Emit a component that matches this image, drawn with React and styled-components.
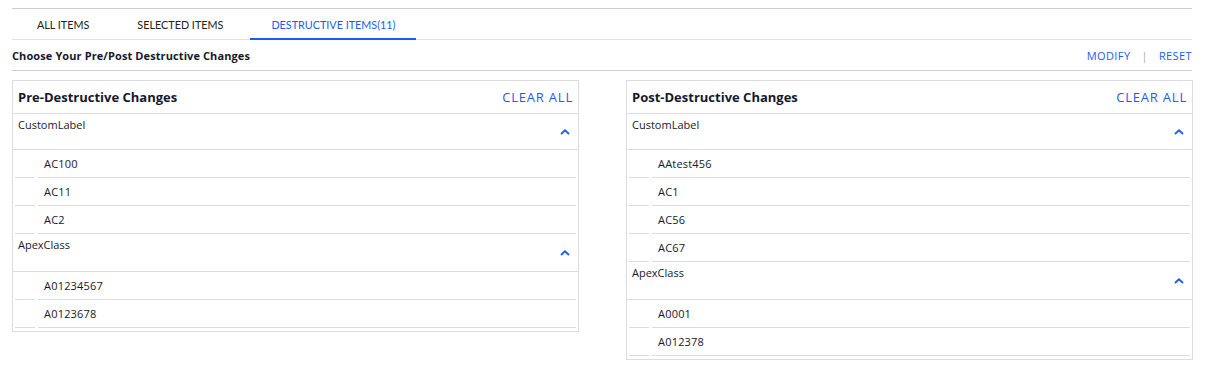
import React from 'react';
import styled, { createGlobalStyle } from 'styled-components';

const GlobalStyle = createGlobalStyle`
  body {
    margin: 0;
    background: #ffffff;
    font-family: 'Open Sans', 'Noto Sans', sans-serif;
    color: #16192c;
  }
`;

const BLUE = '#1b5cf5';
const LINE = '#dcdcdc';

const Page = styled.div`
  padding: 8px 16px 0 12px;
`;

const TabBar = styled.div`
  display: flex;
  gap: 6px;
  height: 30px;
  border-top: 1px solid #cdcdcd;
  border-bottom: 1px solid #e2e2e2;
  padding-left: 4px;
`;

const Tab = styled.div`
  display: flex;
  align-items: center;
  padding: 2px 21px 0;
  font-family: 'Lato', sans-serif;
  font-size: 10.8px;
  text-transform: uppercase;
  color: ${p => (p.active ? BLUE : '#222')};
  border-bottom: 2px solid ${p => (p.active ? BLUE : 'transparent')};
  margin-bottom: -1px;
`;

const SubBar = styled.div`
  display: flex;
  align-items: center;
  justify-content: space-between;
  height: 30px;
  border-bottom: 1px solid #d0d0d0;
`;

const SubTitle = styled.div`
  font-size: 11px;
  font-weight: 700;
  letter-spacing: 0.1px;
  padding-top: 1px;
`;

const Actions = styled.div`
  display: flex;
  align-items: center;
  gap: 11px;
  font-size: 11px;
  letter-spacing: 0.4px;
  color: ${BLUE};
  padding-top: 1px;
`;

const Divider = styled.span`
  color: #aaa;
`;

const Columns = styled.div`
  display: grid;
  grid-template-columns: 567px 567px;
  column-gap: 47px;
  align-items: start;
  margin-top: 9px;
`;

const Panel = styled.div`
  border: 1px solid ${LINE};
  padding-bottom: 3px;
`;

const PanelHead = styled.div`
  display: flex;
  align-items: center;
  justify-content: space-between;
  height: 32px;
  padding: 0 5px 0 5px;
  border-bottom: 1px solid ${LINE};
`;

const PanelTitle = styled.div`
  font-size: 13px;
  font-weight: 700;
`;

const ClearAll = styled.div`
  font-size: 13px;
  letter-spacing: 0.8px;
  color: ${BLUE};
`;

const GroupHead = styled.div`
  display: flex;
  justify-content: space-between;
  height: ${p => (p.first ? 36 : 38)}px;
  padding: 3px 8px 0 5px;
  box-sizing: border-box;
  border-bottom: 1px solid ${LINE};
  font-size: 11px;
`;

const Chevron = styled.svg`
  align-self: center;
  margin-top: -3px;
`;

const ItemRow = styled.div`
  display: grid;
  grid-template-columns: 20px 1fr;
  column-gap: 3px;
  padding: 0 2px;
  height: 28px;
`;

const Cell = styled.div`
  display: flex;
  align-items: center;
  border-bottom: 1px solid ${LINE};
  padding-left: 6px;
  font-size: 11px;
  letter-spacing: 0.2px;
`;

const Group = ({ name, items, first }) => (
  <>
    <GroupHead first={first}>
      <span>{name}</span>
      <Chevron width="10" height="6" viewBox="0 0 10 6">
        <polyline points="1,5 5,1.3 9,5" fill="none" stroke={BLUE} strokeWidth="1.8" />
      </Chevron>
    </GroupHead>
    {items.map(item => (
      <ItemRow key={item}>
        <Cell />
        <Cell>{item}</Cell>
      </ItemRow>
    ))}
  </>
);

const ChangesPanel = ({ title, groups }) => (
  <Panel>
    <PanelHead>
      <PanelTitle>{title}</PanelTitle>
      <ClearAll>CLEAR ALL</ClearAll>
    </PanelHead>
    {groups.map((g, i) => (
      <Group key={g.name} name={g.name} items={g.items} first={i === 0} />
    ))}
  </Panel>
);

const pre = [
  { name: 'CustomLabel', items: ['AC100', 'AC11', 'AC2'] },
  { name: 'ApexClass', items: ['A01234567', 'A0123678'] },
];

const post = [
  { name: 'CustomLabel', items: ['AAtest456', 'AC1', 'AC56', 'AC67'] },
  { name: 'ApexClass', items: ['A0001', 'A012378'] },
];

export default function App() {
  return (
    <Page>
      <GlobalStyle />
      <TabBar>
        <Tab>All Items</Tab>
        <Tab>Selected Items</Tab>
        <Tab active>Destructive Items(11)</Tab>
      </TabBar>
      <SubBar>
        <SubTitle>Choose Your Pre/Post Destructive Changes</SubTitle>
        <Actions>
          <span>MODIFY</span>
          <Divider>|</Divider>
          <span>RESET</span>
        </Actions>
      </SubBar>
      <Columns>
        <ChangesPanel title="Pre-Destructive Changes" groups={pre} />
        <ChangesPanel title="Post-Destructive Changes" groups={post} />
      </Columns>
    </Page>
  );
}
